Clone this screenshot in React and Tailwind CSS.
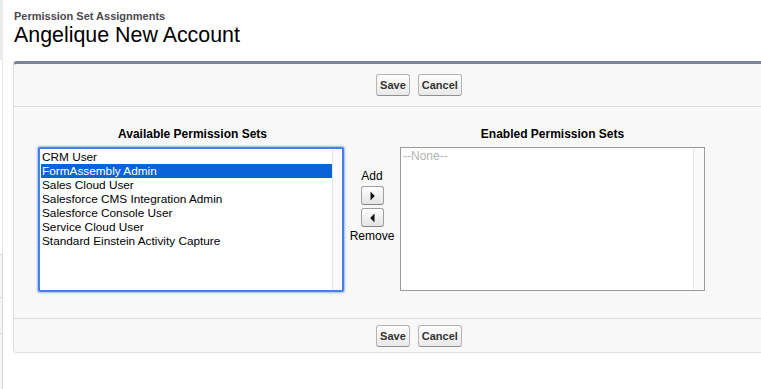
import React from "react";

const available = [
  "CRM User",
  "FormAssembly Admin",
  "Sales Cloud User",
  "Salesforce CMS Integration Admin",
  "Salesforce Console User",
  "Service Cloud User",
  "Standard Einstein Activity Capture",
];

function Btn({ children }) {
  return (
    <button className="h-[22px] px-[3px] rounded-[3px] border border-[#b5b5b5] border-b-[#8f8f8f] bg-gradient-to-b from-white to-[#e9e9e9] text-[11px] font-bold text-[#333] leading-none">
      {children}
    </button>
  );
}

function ButtonRow({ className }) {
  return (
    <div className={"flex justify-center gap-[8px] pl-[2px] " + className}>
      <Btn>Save</Btn>
      <Btn>Cancel</Btn>
    </div>
  );
}

function ArrowBtn({ dir }) {
  return (
    <div className="w-[23px] h-[19px] rounded-[3px] border border-[#a0a0a0] border-b-[#858585] bg-gradient-to-b from-white to-[#e4e4e4] flex items-center justify-center">
      <svg width="5" height="10" viewBox="0 0 5 10">
        {dir === "right" ? (
          <path d="M0.5 0.5 L4.8 5 L0.5 9.5 Z" fill="#111" />
        ) : (
          <path d="M4.5 0.5 L0.2 5 L4.5 9.5 Z" fill="#111" />
        )}
      </svg>
    </div>
  );
}

export default function App() {
  return (
    <div
      className="w-[761px] h-[389px] overflow-hidden bg-white flex"
      style={{ fontFamily: '"Liberation Sans", Arial, sans-serif' }}
    >
      {/* left sidebar edge */}
      <div className="w-[3px] shrink-0 flex flex-col">
        <div className="h-[60px] bg-[#ececec]" />
        <div className="h-[194px] border-r border-[#e6e6e6]" />
        <div className="h-[43px] border-t border-r border-[#d9d9d9] bg-[#f4f4f4]" />
        <div className="h-[36px] border-t border-r border-[#d9d9d9] bg-[#f4f4f4]" />
        <div className="flex-1 border-t border-r border-[#d9d9d9] bg-[#f4f4f4]" />
      </div>

      <div className="flex-1 pl-[10px] pt-[10px]">
        <div className="pl-[1px]">
          <div className="text-[11px] leading-[13px] font-bold text-[#4a4a50]">
            Permission Set Assignments
          </div>
          <div className="text-[21.4px] leading-[24px] text-black">
            Angelique New Account
          </div>
        </div>

        <div className="mt-[14px] w-[810px] rounded-[4px] border border-[#e0e0e0] border-t-[3px] border-t-[#7a869e] bg-[#f8f8f8]">
          <ButtonRow className="py-[10px] border-b border-[#dcdcdc]" />

          <div className="flex pl-[24px] pt-[20px] pb-[26px] border-b border-[#dcdcdc]">
            {/* Available */}
            <div className="w-[306px] flex flex-col">
              <div className="pl-[3px] text-[12px] leading-[14px] font-bold text-black text-center">
                Available Permission Sets
              </div>
              <div className="mt-[6px] h-[145px] rounded-[2px] border-2 border-[#4680ea] shadow-[0_0_2px_1px_#9dbdf5] bg-white flex">
                <div className="flex-1 pl-[1px] pt-[1px]">
                  {available.map((item, i) => (
                    <div
                      key={item}
                      className={
                        "h-[14px] pl-[1px] text-[11.8px] leading-[14px] whitespace-nowrap " +
                        (i === 1 ? "bg-[#0b63d8] text-white" : "text-black")
                      }
                    >
                      {item}
                    </div>
                  ))}
                </div>
                <div className="w-[10px] bg-[#fafafa] border-l border-[#e4e4e4]" />
              </div>
            </div>

            {/* middle */}
            <div className="w-[56px] flex flex-col items-center pt-[42px]">
              <div className="text-[12px] leading-[14px] text-black">Add</div>
              <div className="mt-[3px]">
                <ArrowBtn dir="right" />
              </div>
              <div className="mt-[3px]">
                <ArrowBtn dir="left" />
              </div>
              <div className="mt-[2px] text-[12px] leading-[14px] text-black">Remove</div>
            </div>

            {/* Enabled */}
            <div className="w-[305px] flex flex-col">
              <div className="text-[12px] leading-[14px] font-bold text-black text-center">
                Enabled Permission Sets
              </div>
              <div className="mt-[6px] h-[144px] border border-[#9b9b9b] bg-white flex">
                <div className="flex-1 pl-[2px] pt-[1px] text-[12px] leading-[14px] text-[#b3b3b3]">
                  --None--
                </div>
                <div className="w-[11px] bg-[#fafafa] border-l border-[#e6e6e6]" />
              </div>
            </div>
          </div>

          <ButtonRow className="pt-[6px] pb-[5px]" />
        </div>
      </div>
    </div>
  );
}
